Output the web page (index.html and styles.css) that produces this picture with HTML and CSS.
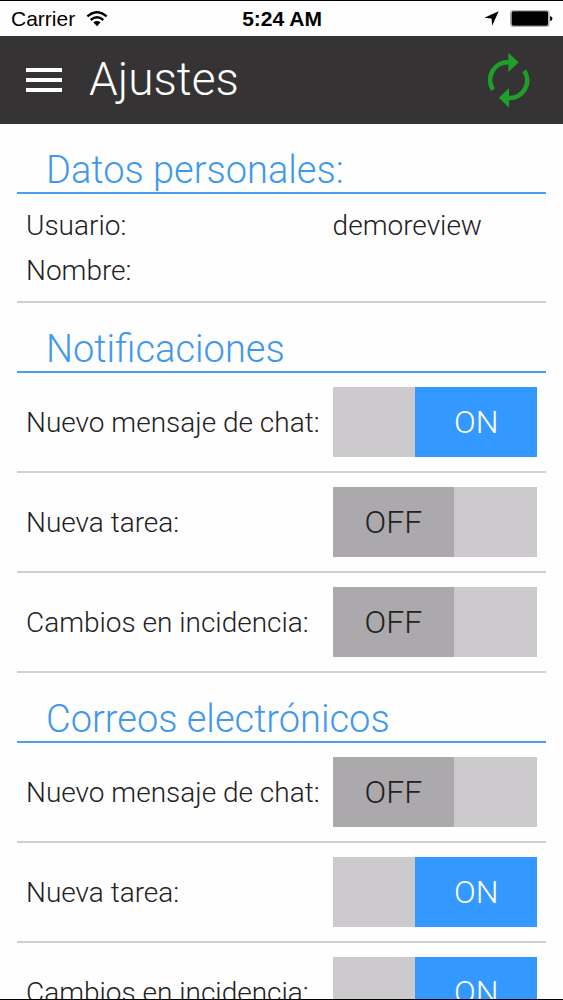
FILE: index.html
```html
<!DOCTYPE html>
<html lang="es">
<head>
  <meta charset="UTF-8" />
  <meta name="viewport" content="width=device-width, initial-scale=1" />
  <title>Ajustes</title>
  <link rel="stylesheet" href="styles.css">
</head>
<body>

  <div class="status-bar">
    <div class="status-left">
      <span>Carrier</span>
      <svg class="wifi" viewBox="0 0 66 48" aria-hidden="true">
        <path d="M4 16 Q33 -9 62 16" />
        <path d="M14 27 Q33 11 52 27" />
        <path class="dot" d="M22 34 Q33 26 44 34 L33 46 Z" />
      </svg>
    </div>
    <span class="clock">5:24 AM</span>
    <div class="status-right">
      <svg class="location" viewBox="0 0 44 44" aria-hidden="true">
        <path d="M43 1 L24 43 L22 22 L1 20 Z" />
      </svg>
      <svg class="battery" viewBox="0 0 130 52" aria-hidden="true">
        <rect class="shell" x="1" y="1" width="118" height="50" rx="8" />
        <rect x="4" y="4" width="112" height="44" rx="5" />
        <path d="M122 18 Q129 20 129 26 Q129 32 122 34 Z" />
      </svg>
    </div>
  </div>

  <header>
    <button class="menu" type="button" aria-label="Menú">
      <svg viewBox="0 0 36 25" aria-hidden="true">
        <rect width="36" height="4" />
        <rect y="10" width="36" height="4" />
        <rect y="20" width="36" height="4" />
      </svg>
    </button>
    <h1>Ajustes</h1>
    <button class="refresh" type="button" aria-label="Actualizar">
      <svg viewBox="50 30 132 180" aria-hidden="true">
        <path class="arc" d="M68 149 A53 53 0 0 1 116 67" />
        <path d="M114 38 L145 67 L114 96 Z" />
        <path class="arc" d="M162 92 A53 53 0 0 1 115 174" />
        <path d="M116 144 L86 173 L116 203 Z" />
      </svg>
    </button>
  </header>

  <main>
    <section>
      <h2>Datos personales:</h2>
      <dl class="datos">
        <dt>Usuario:</dt>
        <dd>demoreview</dd>
        <dt>Nombre:</dt>
        <dd></dd>
      </dl>
    </section>

    <section>
      <h2>Notificaciones</h2>
      <div class="row">
        <label for="notiChat">Nuevo mensaje de chat:</label>
        <div class="toggle">
          <input type="checkbox" id="notiChat" checked />
          <span class="on">ON</span>
          <span class="off">OFF</span>
        </div>
      </div>
      <div class="row">
        <label for="notiTarea">Nueva tarea:</label>
        <div class="toggle">
          <input type="checkbox" id="notiTarea" />
          <span class="on">ON</span>
          <span class="off">OFF</span>
        </div>
      </div>
      <div class="row">
        <label for="notiIncidencia">Cambios en incidencia:</label>
        <div class="toggle">
          <input type="checkbox" id="notiIncidencia" />
          <span class="on">ON</span>
          <span class="off">OFF</span>
        </div>
      </div>
    </section>

    <section>
      <h2>Correos electrónicos</h2>
      <div class="row">
        <label for="mailChat">Nuevo mensaje de chat:</label>
        <div class="toggle">
          <input type="checkbox" id="mailChat" />
          <span class="on">ON</span>
          <span class="off">OFF</span>
        </div>
      </div>
      <div class="row">
        <label for="mailTarea">Nueva tarea:</label>
        <div class="toggle">
          <input type="checkbox" id="mailTarea" checked />
          <span class="on">ON</span>
          <span class="off">OFF</span>
        </div>
      </div>
      <div class="row">
        <label for="mailIncidencia">Cambios en incidencia:</label>
        <div class="toggle">
          <input type="checkbox" id="mailIncidencia" checked />
          <span class="on">ON</span>
          <span class="off">OFF</span>
        </div>
      </div>
    </section>
  </main>

</body>
</html>
```
FILE: styles.css
```css
* {
  box-sizing: border-box;
}
body {
  margin: 0;
  height: 100vh;
  display: flex;
  flex-direction: column;
  overflow: hidden;
  border-top: 1px solid #000;
  border-bottom: 1px solid #000;
  background: #fefefe;
  color: #222;
  font-family: Roboto, sans-serif;
  font-weight: 300;
  font-size: 28px;
}

/* Status bar */
.status-bar {
  flex: none;
  display: grid;
  grid-template-columns: 1fr auto 1fr;
  align-items: center;
  height: 35px;
  padding: 0 10px 0 11px;
  color: #000;
  font-family: "Liberation Sans", Arial, sans-serif;
  font-weight: 400;
  font-size: 21px;
}
.status-left,
.status-right {
  display: flex;
  align-items: center;
  gap: 11px;
}
.status-right {
  justify-content: flex-end;
}
.clock {
  font-weight: 700;
}
.wifi {
  width: 22px;
  height: 16px;
  fill: none;
  stroke: #000;
  stroke-width: 7;
}
.wifi .dot {
  fill: #000;
  stroke: none;
}
.location {
  width: 15px;
  height: 15px;
}
.battery {
  width: 43px;
  height: 17px;
}
.battery .shell {
  fill: none;
  stroke: #777;
  stroke-width: 2;
}

/* Header */
header {
  flex: none;
  display: flex;
  align-items: center;
  height: 88px;
  padding: 0 32px 0 26px;
  background: #363335;
  color: #fff;
}
header button {
  display: flex;
  padding: 0;
  border: none;
  background: none;
  cursor: pointer;
}
.menu svg {
  width: 36px;
  height: 25px;
  fill: #fff;
}
h1 {
  flex: 1;
  margin: 0 0 2px 27px;
  font-weight: 300;
  font-size: 46px;
  line-height: 80px;
}
.refresh svg {
  width: 44px;
  height: 60px;
  fill: #1f9f2a;
}
.refresh .arc {
  fill: none;
  stroke: #1f9f2a;
  stroke-width: 14;
}

/* Contenido */
main {
  flex: 1;
  min-height: 0;
  overflow: hidden;
  padding: 0 17px;
}
h2 {
  margin: 0;
  padding: 24px 29px 0;
  border-bottom: 2px solid #4a9fec;
  color: #3f98ee;
  font-weight: 300;
  font-size: 38px;
  line-height: 44px;
}
.datos,
.row {
  display: grid;
  grid-template-columns: 3fr 2fr;
  align-items: center;
  margin: 0;
  border-bottom: 2px solid #d0d0d0;
}
.datos {
  padding: 9px 9px 8px;
  line-height: 45px;
}
.datos dd {
  margin: 0;
}
.row {
  padding: 14px 9px;
}
.row label {
  white-space: nowrap;
}

/* Interruptor ON / OFF */
.toggle {
  position: relative;
  height: 70px;
}
.toggle input {
  display: block;
  width: 100%;
  height: 100%;
  margin: 0;
  appearance: none;
  background: #cccacc;
  cursor: pointer;
}
.toggle span {
  position: absolute;
  top: 0;
  bottom: 0;
  width: calc(60% - 1px);
  font-size: 32px;
  line-height: 70px;
  text-align: center;
  pointer-events: none;
}
.toggle .on {
  display: none;
  right: 0;
  background: #3398ff;
  color: #fff;
}
.toggle .off {
  left: 0;
  background: #aba9ab;
}
.toggle input:checked ~ .on {
  display: block;
}
.toggle input:checked ~ .off {
  display: none;
}
```
